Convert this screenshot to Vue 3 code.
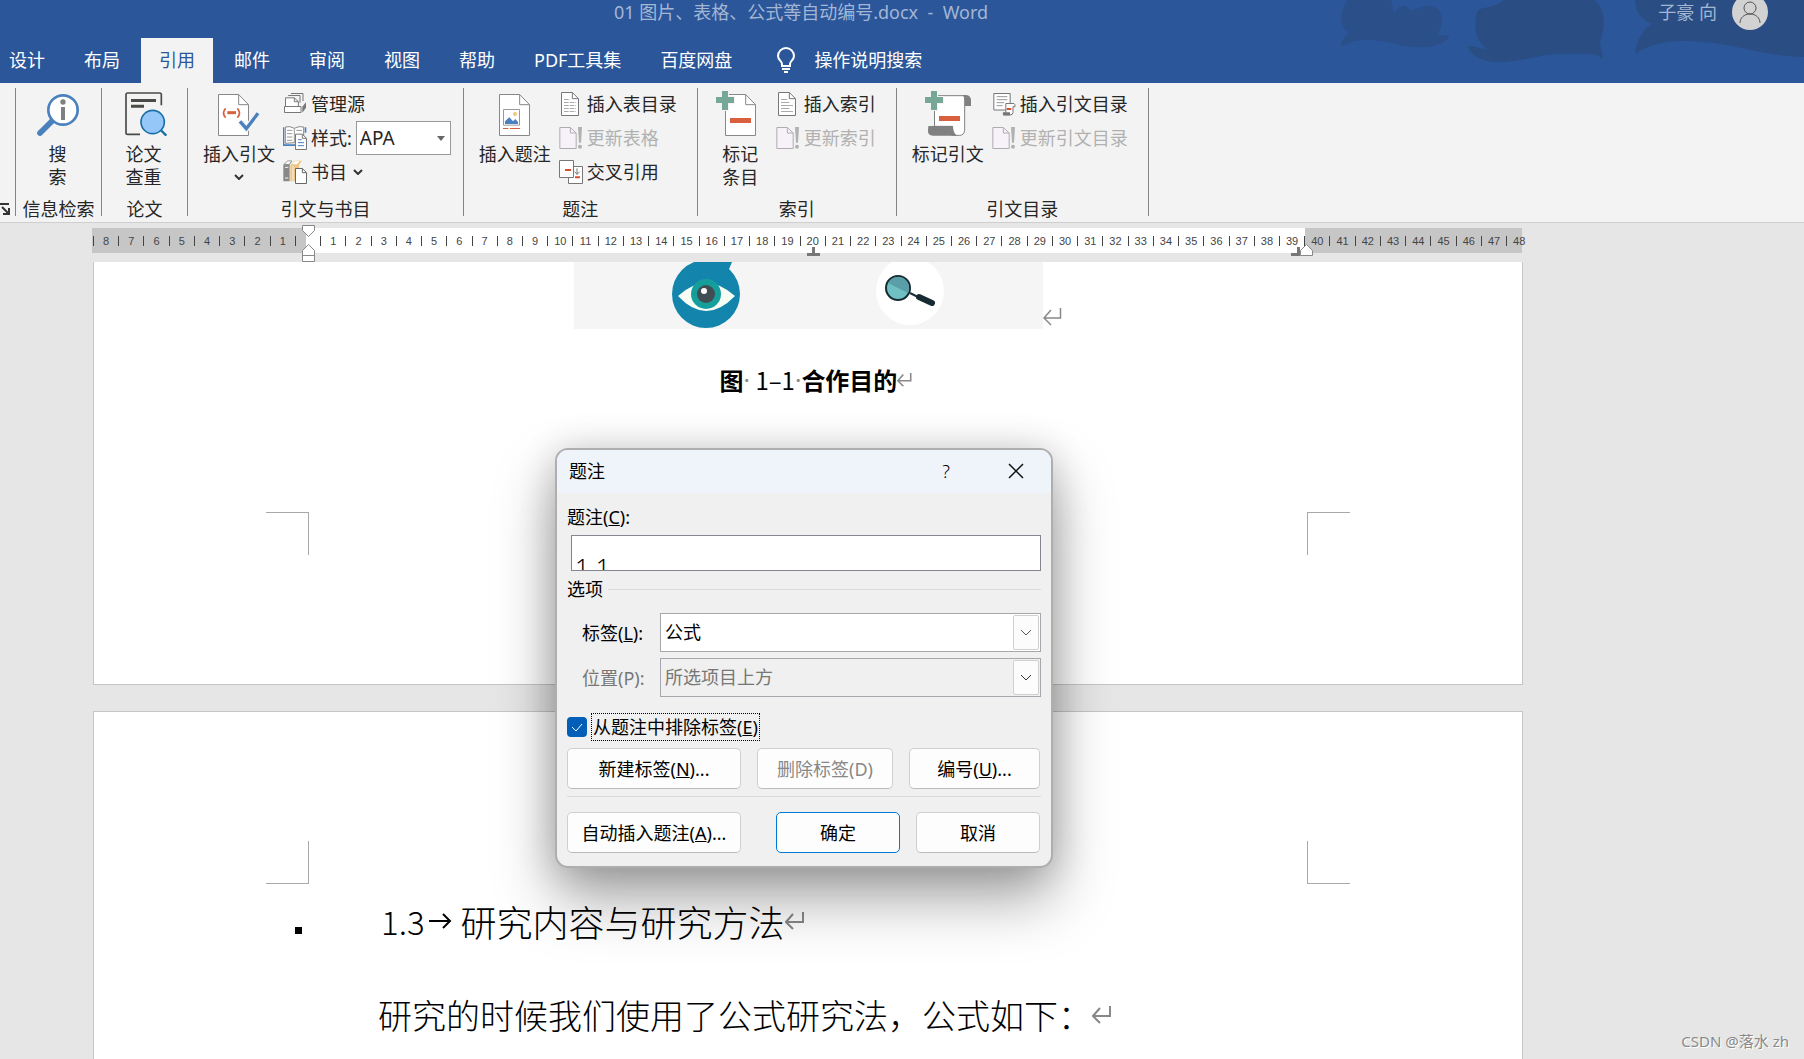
<script setup>
import { ref } from 'vue'

const tabs = ['设计', '布局', '引用', '邮件', '审阅', '视图', '帮助', 'PDF工具集', '百度网盘']
const activeTab = ref('引用')

const ZERO_CELL = 8
const cells = Array.from({ length: 57 }, (_, i) => Math.abs(i - ZERO_CELL))

const citationStyle = ref('APA')
const caption = ref('1 1')
const label = ref('公式')
const position = ref('所选项目上方')
const excludeLabel = ref(true)
</script>

<template>
  <div class="app">
    <header class="header">
      <svg class="clouds" width="504" height="83" viewBox="0 0 504 83" aria-hidden="true">
        <g fill="#2a4e84">
          <path opacity=".8" d="M47 0C39 14 39 27 49 32C44 36 41 42 41 47C55 38 72 39 92 43C112 50 142 49 149 37C150 34 142 35 137 36C145 22 144 8 130 6C120 4 114 14 108 8C104 2 97 10 94 12L91 0Z" />
          <path d="M177 12C172 30 178 43 187 49C178 49 168 43 168 48C175 60 190 63 205 62C230 60 242 54 260 54H288C295 54 300 56 303 60L300 42C304 30 308 12 295 0H204C190 10 180 6 177 12Z" />
          <path d="M335 0C335 12 342 20 352 24C342 30 336 42 335 54C345 46 365 40 390 41C430 42 460 56 504 57V0Z" />
        </g>
      </svg>
      <div class="titlebar">
        <span class="doc-title">01 图片、表格、公式等自动编号.docx&nbsp; -&nbsp; Word</span>
        <div class="account">
          <span>子豪 向</span>
          <svg width="36" height="36" viewBox="0 0 36 36">
            <circle cx="18" cy="18" r="18" fill="#d2d2d2" />
            <circle cx="18" cy="14" r="6" fill="none" stroke="#555" />
            <path d="M8 29C8 24 12 20 18 20S28 24 28 29" fill="none" stroke="#555" />
          </svg>
        </div>
      </div>
      <nav class="tabs">
        <button v-for="t in tabs" :key="t" class="tab" :class="{ active: t === activeTab }" @click="activeTab = t">{{ t }}</button>
        <button class="tab tell-me">
          <svg width="20" height="26" viewBox="0 0 20 26" fill="none" stroke="#fff" stroke-width="2">
            <path d="M6 19V17C6 14 2 13 2 9A8 8 0 0 1 18 9C18 13 14 14 14 17V19Z" />
            <path d="M6 22H14M8 25H12" />
          </svg>
          操作说明搜索
        </button>
      </nav>
    </header>

    <section class="ribbon">
      <div class="group stub">
        <svg width="11" height="14" viewBox="0 0 11 14" fill="none" stroke="#333" stroke-width="2">
          <path d="M0 2H9M2 5L8 11M9 6V12H3" />
        </svg>
      </div>

      <div class="group narrow">
        <div class="body">
          <button class="big">
            <span class="big-icon">
              <svg width="42" height="42" viewBox="0 0 126 126">
                <path d="M46 80L9 117" stroke="#4a80bd" stroke-width="17" stroke-linecap="round" />
                <circle cx="78" cy="48" r="44" fill="#fff" stroke="#4a80bd" stroke-width="8" />
                <circle cx="78" cy="24" r="8" fill="#808080" />
                <path d="M72 39H84V78H72Z" fill="#808080" />
              </svg>
            </span>
            <span>搜<br>索</span>
          </button>
        </div>
        <div class="group-name">信息检索</div>
      </div>

      <div class="group narrow">
        <div class="body">
          <button class="big">
            <span class="big-icon">
              <svg width="48" height="44" viewBox="-15 0 144 132" fill="none">
                <path d="M109 40V8Q109 3 104 3H8Q3 3 3 8V122Q3 127 8 127H45" stroke="#4a4a46" stroke-width="5" />
                <path d="M18 25.500H93M18 42.500H57" stroke="#4a4a46" stroke-width="9" />
                <circle cx="83" cy="90" r="35" fill="#95c7f8" stroke="#1a6fa5" stroke-width="5" />
                <path d="M107 114L124 131" stroke="#1a6fa5" stroke-width="7" />
              </svg>
            </span>
            <span>论文<br>查重</span>
          </button>
        </div>
        <div class="group-name">论文</div>
      </div>

      <div class="group tight">
        <div class="body">
          <button class="big">
            <span class="big-icon">
              <svg width="42" height="42" viewBox="0 0 126 126" fill="none">
                <path d="M1.500 1.500H62L91.500 32V124.500H1.500Z" fill="#fff" stroke="#888" stroke-width="3" />
                <path d="M62 2V32H91" stroke="#888" stroke-width="3" />
                <path d="M23 43Q10 57 23 71M58 43Q71 57 58 71" stroke="#d9603f" stroke-width="5" />
                <path d="M28 56H54" stroke="#d9603f" stroke-width="9" />
                <path d="M66 82L85 104L120 58" stroke="#f3f3f3" stroke-width="18" />
                <path d="M66 82L85 104L120 58" stroke="#4a80bd" stroke-width="10" />
              </svg>
            </span>
            <span>插入引文</span>
            <svg class="big-arrow" width="10" height="6" viewBox="0 0 10 6" fill="none" stroke="#333" stroke-width="2"><path d="M1 1L5 5L9 1" /></svg>
          </button>
          <div class="stack">
            <button class="small">
              <svg width="24" height="24" viewBox="0 0 72 72" fill="none" stroke="#777" stroke-width="3">
                <path d="M24 4.500H60V27M16 12V10.500H51V32" />
                <path d="M7.500 44V17.500H34L46 29V44" fill="#fff" />
                <path d="M34 18V29H46" />
                <path d="M4.500 43.500H54V61.500H4.500Z" fill="#fff" />
                <path d="M58 44L69 31V47L58 62Z" fill="#777" stroke="none" />
              </svg>
              管理源
            </button>
            <div class="small">
              <svg width="24" height="24" viewBox="0 0 72 72" fill="none" stroke-width="3">
                <path d="M1.500 4V57.500H36M67.500 4V20" stroke="#4a80bd" stroke-width="5" />
                <path d="M7 3Q21 -1 34 7Q48 -1 62 3V50H34L7 52Z" fill="#fff" stroke="#888" />
                <path d="M34 7V50M12 13H28M12 23H28M12 33H28M12 43H28M40 13H57" stroke="#999" />
                <path d="M37.500 24.500H58L70.500 37V70.500H37.500Z" fill="#fff" stroke="#777" />
                <path d="M58 25V37H70" stroke="#777" />
                <path d="M45 41H56M45 50H63M45 59H63" stroke="#4a80bd" />
              </svg>
              <label for="cite-style">样式:</label>
              <span class="style-box">
                <select id="cite-style" v-model="citationStyle"><option>APA</option></select>
                <svg width="8" height="5" viewBox="0 0 8 5"><path d="M0 0H8L4 5Z" fill="#666" /></svg>
              </span>
            </div>
            <button class="small">
              <svg width="24" height="24" viewBox="0 0 72 72" fill="none" stroke-width="3">
                <path d="M1 14L14 2H28L20 14V64H1Z" fill="#888" />
                <path d="M3 13L14 3H26L19 13Z" fill="#fff" stroke="#888" stroke-width="2" />
                <path d="M22 15L35 2H57L48 15V64H22Z" fill="#efc583" />
                <path d="M26 13L36 4H50L42 13Z" fill="#fff" />
                <path d="M30 18V64M6 22H16M6 54H16" stroke="#f3f3f3" />
                <path d="M37.500 25.500H58L70.500 38V70.500H37.500Z" fill="#fff" stroke="#666" />
                <path d="M58 26V38H70" stroke="#666" />
              </svg>
              书目
              <svg class="more" width="10" height="6" viewBox="0 0 10 6" fill="none" stroke="#333" stroke-width="2"><path d="M1 1L5 5L9 1" /></svg>
            </button>
          </div>
        </div>
        <div class="group-name">引文与书目</div>
      </div>

      <div class="group">
        <div class="body">
          <button class="big">
            <span class="big-icon">
              <svg width="31" height="42" viewBox="0 0 93 126" fill="none">
                <path d="M1.500 1.500H62L91.500 32V124.500H1.500Z" fill="#fff" stroke="#888" stroke-width="3" />
                <path d="M62 2V32H91" stroke="#888" stroke-width="3" />
                <path d="M13.500 46.500H61.500V93.500H13.500Z" stroke="#999" stroke-width="3" />
                <circle cx="48" cy="60" r="6" fill="#f0c878" />
                <path d="M18 90V82L31 70L42 82L49 75L57 84V90Z" fill="#4a80bd" />
                <path d="M12 103.500H28M33 103.500H63" stroke="#d9603f" stroke-width="3" />
              </svg>
            </span>
            <span>插入题注</span>
          </button>
          <div class="stack">
            <button class="small">
              <svg width="24" height="24" viewBox="0 0 72 72" fill="none" stroke="#777" stroke-width="3">
                <path d="M7.500 1.500H40L58.500 20V70.500H7.500Z" fill="#fff" />
                <path d="M40 2V20H58" />
                <path d="M15 22.500H33M15 31.500H51M15 40.500H51M15 49.500H51M15 58.500H51" stroke="#aaa" stroke-dasharray="14 3" />
              </svg>
              插入表目录
            </button>
            <button class="small" disabled>
              <svg width="24" height="24" viewBox="0 0 72 72" fill="none" stroke="#b1acb1" stroke-width="3">
                <path d="M2.500 4.500H34L51.500 21V67.500H2.500Z" fill="#f7f1f9" />
                <path d="M34 5V21H51" />
                <path d="M57 3H69L66 50H60Z" fill="#b1b1b1" stroke="none" />
                <circle cx="63" cy="62" r="6" fill="#b1b1b1" stroke="none" />
              </svg>
              更新表格
            </button>
            <button class="small">
              <svg width="24" height="24" viewBox="0 0 72 72" fill="none" stroke="#777" stroke-width="3">
                <path d="M28.500 19.500H70.500V70.500H28.500Z" fill="#fff" />
                <path d="M1.500 1.500H43.500V52.500H1.500Z" fill="#fff" />
                <path d="M54 25V43M47 35L54 43L62 35" />
                <path d="M18 30H36M48 52H63" stroke="#d9502f" stroke-width="6" />
              </svg>
              交叉引用
            </button>
          </div>
        </div>
        <div class="group-name">题注</div>
      </div>

      <div class="group">
        <div class="body">
          <button class="big">
            <span class="big-icon">
              <svg width="48" height="45" viewBox="0 0 144 135" fill="none">
                <path d="M28.500 10.500H89L118.500 41V133.500H28.500Z" fill="#fff" stroke="#888" stroke-width="3" />
                <path d="M89 11V41H118" stroke="#888" stroke-width="3" />
                <path d="M15 0H39V15H57V39H39V60H15Z" fill="#f3f3f3" />
                <path d="M18 0H36V18H54V36H36V57H18V36H0V18H18Z" fill="#77a797" />
                <path d="M42 81H105V96H42Z" fill="#d9603f" />
              </svg>
            </span>
            <span>标记<br>条目</span>
          </button>
          <div class="stack">
            <button class="small">
              <svg width="24" height="24" viewBox="0 0 72 72" fill="none" stroke="#777" stroke-width="3">
                <path d="M7.500 1.500H40L58.500 20V70.500H7.500Z" fill="#fff" />
                <path d="M40 2V20H58" />
                <path d="M15 22.500H33M15 31.500H40M15 40.500H51M15 49.500H40M15 58.500H51" stroke="#aaa" />
              </svg>
              插入索引
            </button>
            <button class="small" disabled>
              <svg width="24" height="24" viewBox="0 0 72 72" fill="none" stroke="#b1acb1" stroke-width="3">
                <path d="M2.500 4.500H34L51.500 21V67.500H2.500Z" fill="#f7f1f9" />
                <path d="M34 5V21H51" />
                <path d="M57 3H69L66 50H60Z" fill="#b1b1b1" stroke="none" />
                <circle cx="63" cy="62" r="6" fill="#b1b1b1" stroke="none" />
              </svg>
              更新索引
            </button>
          </div>
        </div>
        <div class="group-name">索引</div>
      </div>

      <div class="group">
        <div class="body">
          <button class="big">
            <span class="big-icon">
              <svg width="46" height="45" viewBox="0 0 138 135" fill="none">
                <path d="M110 12H124Q138 14 138 28V45H118V30Z" fill="#808080" />
                <path d="M28.500 106V14H116Q119 18 119 28V118Q117 133 104 133H80V106Z" fill="#fff" stroke="#808080" stroke-width="3" />
                <path d="M10 105H84Q84 126 96 134H24Q8 134 9 118Z" fill="#808080" />
                <path d="M15 0H39V15H57V39H39V60H15Z" fill="#f3f3f3" />
                <path d="M18 0H36V18H54V36H36V57H18V36H0V18H18Z" fill="#77a797" />
                <path d="M42 75H105V90H42Z" fill="#d9603f" />
              </svg>
            </span>
            <span>标记引文</span>
          </button>
          <div class="stack">
            <button class="small">
              <svg width="24" height="24" viewBox="0 0 72 72" fill="none" stroke="#777" stroke-width="3">
                <path d="M5.500 4.500H54.500V54H5.500Z" fill="#fff" />
                <path d="M14 14H46M14 23H46M14 32H36M14 41H32" stroke="#999" />
                <path d="M41.500 62V34.500H66Q70 36 69 44H63V62Q62 69 54 69H34V63H41" fill="#fff" />
                <path d="M33 61H54V70H36Z" fill="#777" stroke="none" />
                <path d="M44 51H58" stroke="#d9502f" stroke-width="6" />
              </svg>
              插入引文目录
            </button>
            <button class="small" disabled>
              <svg width="24" height="24" viewBox="0 0 72 72" fill="none" stroke="#b1acb1" stroke-width="3">
                <path d="M2.500 4.500H34L51.500 21V67.500H2.500Z" fill="#f7f1f9" />
                <path d="M34 5V21H51" />
                <path d="M57 3H69L66 50H60Z" fill="#b1b1b1" stroke="none" />
                <circle cx="63" cy="62" r="6" fill="#b1b1b1" stroke="none" />
              </svg>
              更新引文目录
            </button>
          </div>
        </div>
        <div class="group-name">引文目录</div>
      </div>
    </section>

    <main class="workspace">
      <div class="ruler">
        <div class="scale">
          <span v-for="(n, i) in cells" :key="i" class="cell">{{ n || '' }}</span>
        </div>
        <svg class="marker indent-left" width="14" height="38" viewBox="0 0 14 38" fill="#fff" stroke="#888">
          <path d="M.5 .5H12.500V5.500L6.500 11.500L.5 5.500Z" />
          <path d="M.5 36.500V25.500L6.500 19.500L12.500 25.500V36.500ZM.5 30.500H12.500" />
        </svg>
        <svg class="marker tab-center" width="14" height="10" viewBox="0 0 14 10" fill="#777"><path d="M5 0H8V6H13V9H0V6H5Z" /></svg>
        <svg class="marker indent-right" width="23" height="13" viewBox="0 0 23 13">
          <path d="M6 3H9V12H0V9H6Z" fill="#777" />
          <path d="M9.500 11.500V6.500L15.500 .5L21.500 6.500V11.500Z" fill="#fff" stroke="#888" />
        </svg>
      </div>

      <article class="page first">
        <div class="figure">
          <svg width="469" height="67" viewBox="0 0 469 67">
            <path d="M0 0H469V67H0Z" fill="#f5f5f5" />
            <circle cx="132" cy="32" r="34" fill="#1385ac" />
            <path d="M140 0H158L153 12Z" fill="#1385ac" />
            <path d="M104 34Q132 8 161 34Q132 64 104 34Z" fill="#f5fdf5" />
            <circle cx="132" cy="32" r="15" fill="#159f9c" />
            <circle cx="132" cy="32" r="9" fill="#404d52" />
            <circle cx="130" cy="29" r="3" fill="#fff" />
            <circle cx="336" cy="29" r="34" fill="#fff" />
            <path d="M336 31L344 35" stroke="#1c303a" stroke-width="2" />
            <path d="M345 35L358 41" stroke="#182a33" stroke-width="6" stroke-linecap="round" />
            <circle cx="324" cy="26" r="12" fill="#6fc0c2" stroke="#182a33" stroke-width="2" />
            <path d="M314 21A11 11 0 0 1 334 31Z" fill="#5a9fa8" />
          </svg>
          <svg class="return" width="19" height="18" viewBox="0 0 19 18" fill="none" stroke="#888" stroke-width="1.500"><path d="M17.500 0V10H1M8 2L1 10L8 17" /></svg>
        </div>
        <p class="caption">
          <b>图</b><i>·</i> 1–1<i>·</i> <b>合作目的</b>
          <svg width="15" height="14" viewBox="0 0 19 18" fill="none" stroke="#888" stroke-width="2"><path d="M17.500 0V10H1M8 2L1 10L8 17" /></svg>
        </p>
        <div class="crops top"><span></span><span></span></div>
      </article>

      <article class="page second">
        <div class="crops bottom"><span></span><span></span></div>
        <h2 class="heading">
          <span class="bullet"></span>
          <span class="number">1.3</span>
          <svg width="24" height="18" viewBox="0 0 24 18" fill="none" stroke="#000" stroke-width="2"><path d="M0 9H21M14 2L21 9L14 16" /></svg>
          <span>研究内容与研究方法</span>
          <svg width="19" height="18" viewBox="0 0 19 18" fill="none" stroke="#888" stroke-width="2"><path d="M18 0V10H1M8 2L1 10L8 17" /></svg>
        </h2>
        <p class="para">
          研究的时候我们使用了公式研究法，公式如下：
          <svg width="19" height="18" viewBox="0 0 19 18" fill="none" stroke="#888" stroke-width="2"><path d="M18 0V10H1M8 2L1 10L8 17" /></svg>
        </p>
      </article>
    </main>

    <div class="dialog" role="dialog" aria-labelledby="dlg-title">
      <div class="dlg-title">
        <span id="dlg-title">题注</span>
        <button class="dlg-icon">?</button>
        <button class="dlg-icon" aria-label="关闭">
          <svg width="16" height="16" viewBox="0 0 16 16" fill="none" stroke="#111" stroke-width="1.500"><path d="M1 1L15 15M15 1L1 15" /></svg>
        </button>
      </div>
      <form class="dlg-body" @submit.prevent>
        <label class="cap-label" for="cap">题注(<u>C</u>):</label>
        <textarea id="cap" v-model="caption" class="cap-input" rows="1"></textarea>
        <div class="legend"><span>选项</span><hr></div>
        <div class="field">
          <label for="lbl">标签(<u>L</u>):</label>
          <span class="combo">
            <select id="lbl" v-model="label"><option>公式</option></select>
            <span class="drop"><svg width="12" height="7" viewBox="0 0 12 7" fill="none" stroke="#555"><path d="M1 1L6 6L11 1" /></svg></span>
          </span>
        </div>
        <div class="field off">
          <label for="pos">位置(P):</label>
          <span class="combo">
            <select id="pos" v-model="position" disabled><option>所选项目上方</option></select>
            <span class="drop"><svg width="12" height="7" viewBox="0 0 12 7" fill="none" stroke="#333"><path d="M1 1L6 6L11 1" /></svg></span>
          </span>
        </div>
        <div class="check">
          <input id="exc" v-model="excludeLabel" type="checkbox">
          <svg class="tick" width="20" height="20" viewBox="0 0 20 20" fill="none" stroke="#fff"><path d="M5 10L9 14L15 7" /></svg>
          <label for="exc">从题注中排除标签(<u>E</u>)</label>
        </div>
        <div class="row">
          <button class="btn wide">新建标签(<u>N</u>)...</button>
          <button class="btn mid" disabled>删除标签(D)</button>
          <button class="btn num">编号(<u>U</u>)...</button>
        </div>
        <hr>
        <div class="row last">
          <button class="btn wide auto">自动插入题注(<u>A</u>)...</button>
          <button class="btn ok">确定</button>
          <button class="btn cancel">取消</button>
        </div>
      </form>
    </div>

    <div class="watermark">CSDN @落水 zh</div>
  </div>
</template>

<style>
body {
  margin: 0;
  overflow: hidden;
}
</style>

<style scoped>
.app {
  position: relative;
  display: flex;
  flex-direction: column;
  height: 100vh;
  overflow: hidden;
  background: #e6e6e6;
  color: #262626;
  font: 18px/24px "Noto Sans", "Noto Sans CJK SC", sans-serif;
}
.app * {
  box-sizing: border-box;
}
svg {
  display: block;
  flex: none;
}
button {
  margin: 0;
  padding: 0;
  border: 0;
  background: none;
  color: inherit;
  font: inherit;
  white-space: nowrap;
}
select,
textarea {
  margin: 0;
  appearance: none;
  border-radius: 0;
  outline: 0;
  color: inherit;
  font: inherit;
}
hr {
  width: 100%;
  margin: 0;
  border: 0;
  border-top: 1px solid #dadada;
}

/* header */
.header {
  position: relative;
  flex: none;
  overflow: hidden;
  background: #2b579a;
  color: #fff;
}
.clouds {
  position: absolute;
  top: 0;
  right: 0;
}
.titlebar {
  position: relative;
  display: grid;
  grid-template-columns: 1fr auto 1fr;
  grid-template-rows: 24px;
  align-items: center;
  margin-bottom: 14px;
  color: #a3b6d5;
}
.doc-title {
  grid-column: 2;
  margin-right: 202px;
}
.account {
  display: flex;
  align-items: center;
  justify-content: flex-end;
  gap: 15px;
  padding-right: 36px;
}
.doc-title,
.account span {
  white-space: nowrap;
}
.tabs {
  position: relative;
  display: flex;
  gap: 3px;
  margin-left: -9px;
}
.tab {
  display: flex;
  align-items: center;
  height: 45px;
  padding: 0 18px 2px;
}
.tab.active {
  background: #f3f3f3;
  color: #2b579a;
}
.tell-me {
  gap: 18px;
  padding-left: 23px;
}

/* ribbon */
.ribbon {
  display: flex;
  flex: none;
  padding: 5px 0 6px;
  border-bottom: 1px solid #cfcfcf;
  background: #f3f3f3;
}
.group {
  display: flex;
  flex: none;
  flex-direction: column;
  height: 128px;
  border-right: 1px solid #848484;
}
.body {
  display: flex;
  flex: 1;
  justify-content: center;
  gap: 8px;
  padding: 0 20px 0 15px;
}
.tight .body {
  padding-right: 12px;
}
.group.narrow {
  width: 86px;
}
.narrow .body {
  padding: 0 2px 0 0;
}
.group.stub {
  width: 16px;
  justify-content: flex-end;
}
.group-name {
  line-height: 14px;
  text-align: center;
}
.big {
  display: flex;
  flex-direction: column;
  align-items: center;
  min-width: 55px;
  padding-top: 3px;
  line-height: 23px;
}
.big-icon {
  display: flex;
  align-items: flex-end;
  height: 45px;
  margin-bottom: 7px;
}
.big-arrow {
  margin-top: 8px;
}
.stack {
  display: flex;
  flex-direction: column;
  margin-top: -1px;
}
.small {
  display: flex;
  align-items: center;
  gap: 4px;
  height: 34px;
}
.small:disabled {
  color: #b1b1b1;
}
.more {
  margin-left: 2px;
}
.style-box {
  position: relative;
}
.style-box select {
  display: block;
  width: 95px;
  height: 34px;
  padding: 0 3px;
  border: 1px solid #999;
  background: #fff;
  font-size: 19px;
}
.style-box svg {
  position: absolute;
  top: 15px;
  right: 6px;
  pointer-events: none;
}

/* ruler */
.workspace {
  display: flex;
  flex: 1;
  flex-direction: column;
  min-height: 0;
  padding: 5px 281px 0 93px;
}
.ruler {
  position: relative;
  flex: none;
  height: 25px;
  margin: 0 1px 9px -1px;
  background: linear-gradient(to right, #c6c6c6 15%, #fff 15%, #fff 84.8%, #c6c6c6 84.8%);
}
.scale {
  display: flex;
  margin: 0 -9px 0 1px;
  padding-top: 8px;
}
.cell {
  flex: 1 1 0;
  border-left: 1px solid #444;
  color: #444;
  font: 11px/10px "Liberation Sans", sans-serif;
  text-align: center;
}
.marker {
  position: absolute;
}
.indent-left {
  top: -3px;
  left: 15%;
  margin-left: -5px;
}
.tab-center {
  top: 19px;
  left: 50%;
}
.indent-right {
  top: 16px;
  left: 85%;
  margin-left: -17px;
}

/* pages */
.page {
  flex: none;
  border: 1px solid #c6c6c6;
  background: #fff;
  color: #000;
}
.first {
  height: 423px;
  border-top: 0;
}
.second {
  flex: 1;
  margin-top: 26px;
  border-bottom: 0;
}
.figure {
  display: flex;
  justify-content: center;
  padding-left: 20px;
}
.return {
  margin-top: 46px;
}
.caption {
  display: flex;
  justify-content: center;
  align-items: center;
  height: 40px;
  margin: 31px 0 0;
  padding-left: 16px;
  font: 24px/40px "Noto Sans CJK SC", sans-serif;
  white-space: pre;
}
.caption i {
  color: #888;
  font-family: "Noto Sans", sans-serif;
  font-style: normal;
}
.crops {
  display: flex;
  justify-content: space-between;
  padding: 0 172px;
}
.crops span {
  width: 43px;
  height: 43px;
  border: 0 solid #a8a8a8;
}
.crops.top {
  margin-top: 112px;
}
.crops.bottom {
  margin-top: 129px;
}
.crops.top span {
  border-top-width: 1px;
}
.crops.bottom span {
  border-bottom-width: 1px;
}
.crops span:first-child {
  border-right-width: 1px;
}
.crops span:last-child {
  border-left-width: 1px;
}
.heading {
  display: flex;
  align-items: center;
  margin: 11px 0 0 201px;
  font: 300 36px/52px "Noto Sans CJK SC", sans-serif;
  white-space: nowrap;
}
.bullet {
  width: 7px;
  height: 7px;
  margin: 18px 79px 0 0;
  background: #000;
}
.number {
  margin-right: 4px;
  font-size: 33px;
}
.heading svg:not(:last-child) {
  margin-right: 8px;
}
.para {
  display: flex;
  align-items: center;
  margin: 43px 0 0 284px;
  font: 300 34px/50px "Noto Sans CJK SC", sans-serif;
  white-space: nowrap;
}

/* dialog window */
.dialog {
  position: absolute;
  top: 448px;
  left: 555px;
  width: 498px;
  border: 2px solid #aeaeae;
  border-radius: 13px;
  overflow: hidden;
  background: #f0f0f0;
  box-shadow: 0 30px 60px rgba(0, 0, 0, .36), 0 2px 36px rgba(0, 0, 0, .16);
  color: #000;
}
.dlg-title {
  display: flex;
  align-items: center;
  height: 43px;
  padding: 0 0 2px 12px;
  background: #eef4f9;
}
.dlg-title span {
  flex: 1;
}
.dlg-icon {
  display: flex;
  justify-content: center;
  width: 70px;
  font-weight: 300;
}
.dlg-body {
  display: flex;
  flex-direction: column;
  padding: 12px 10px 13px;
}
.cap-label {
  align-self: flex-start;
}
.cap-input {
  height: 36px;
  margin: 6px 0 0 4px;
  padding: 15px 3px 0;
  border: 1px solid #838590;
  overflow: hidden;
  background: #fff;
  font-size: 25px;
  font-weight: 300;
  line-height: 32px;
  resize: none;
}
.legend {
  display: flex;
  align-items: center;
  gap: 5px;
  height: 24px;
  margin: 6px 0 12px;
}
.legend span {
  flex: none;
}
.field {
  display: flex;
  align-items: center;
  margin-bottom: 6px;
  padding-left: 15px;
}
.field label {
  width: 78px;
}
.combo {
  position: relative;
  flex: 1;
}
.combo select {
  display: block;
  width: 100%;
  height: 39px;
  padding: 0 4px 1px;
  border: 1px solid #a5a7ad;
  background: #fff;
}
.off {
  margin-bottom: 16px;
}
.off,
.off select {
  color: #777;
  opacity: 1;
}
.combo select:disabled {
  background: #f0f0f0;
}
.drop {
  position: absolute;
  top: 2px;
  right: 2px;
  display: grid;
  place-items: center;
  width: 26px;
  height: 35px;
  border: 1px solid #d0d0d0;
  border-radius: 2px;
  background: #fcfcfc;
  pointer-events: none;
}
.check {
  position: relative;
  display: flex;
  align-items: center;
  gap: 4px;
}
.check input {
  width: 20px;
  height: 20px;
  margin: 0;
  appearance: none;
  border-radius: 4px;
  background: #005fb8;
}
.tick {
  position: absolute;
  left: 0;
  pointer-events: none;
}
.check label {
  padding: 1px;
  border: 1px dotted #000;
}
.row {
  display: flex;
  justify-content: space-between;
  margin: 7px 0;
  padding-right: 1px;
}
.row.last {
  gap: 16px;
  margin: 15px 0 0;
}
.btn {
  height: 41px;
  border: 1px solid #cfcfcf;
  border-bottom-color: #bbb;
  border-radius: 5px;
  background: #fdfdfd;
}
.btn:disabled {
  color: #888;
}
.wide {
  width: 174px;
}
.mid {
  width: 136px;
}
.num {
  width: 131px;
}
.auto {
  margin-right: auto;
}
.ok,
.cancel {
  width: 124px;
}
.ok {
  border-color: #0078d4;
}

.watermark {
  position: absolute;
  right: 15px;
  bottom: 6px;
  color: #8a8a8a;
  font-size: 15px;
  text-shadow: 1px 1px 0 #fff;
}
</style>
